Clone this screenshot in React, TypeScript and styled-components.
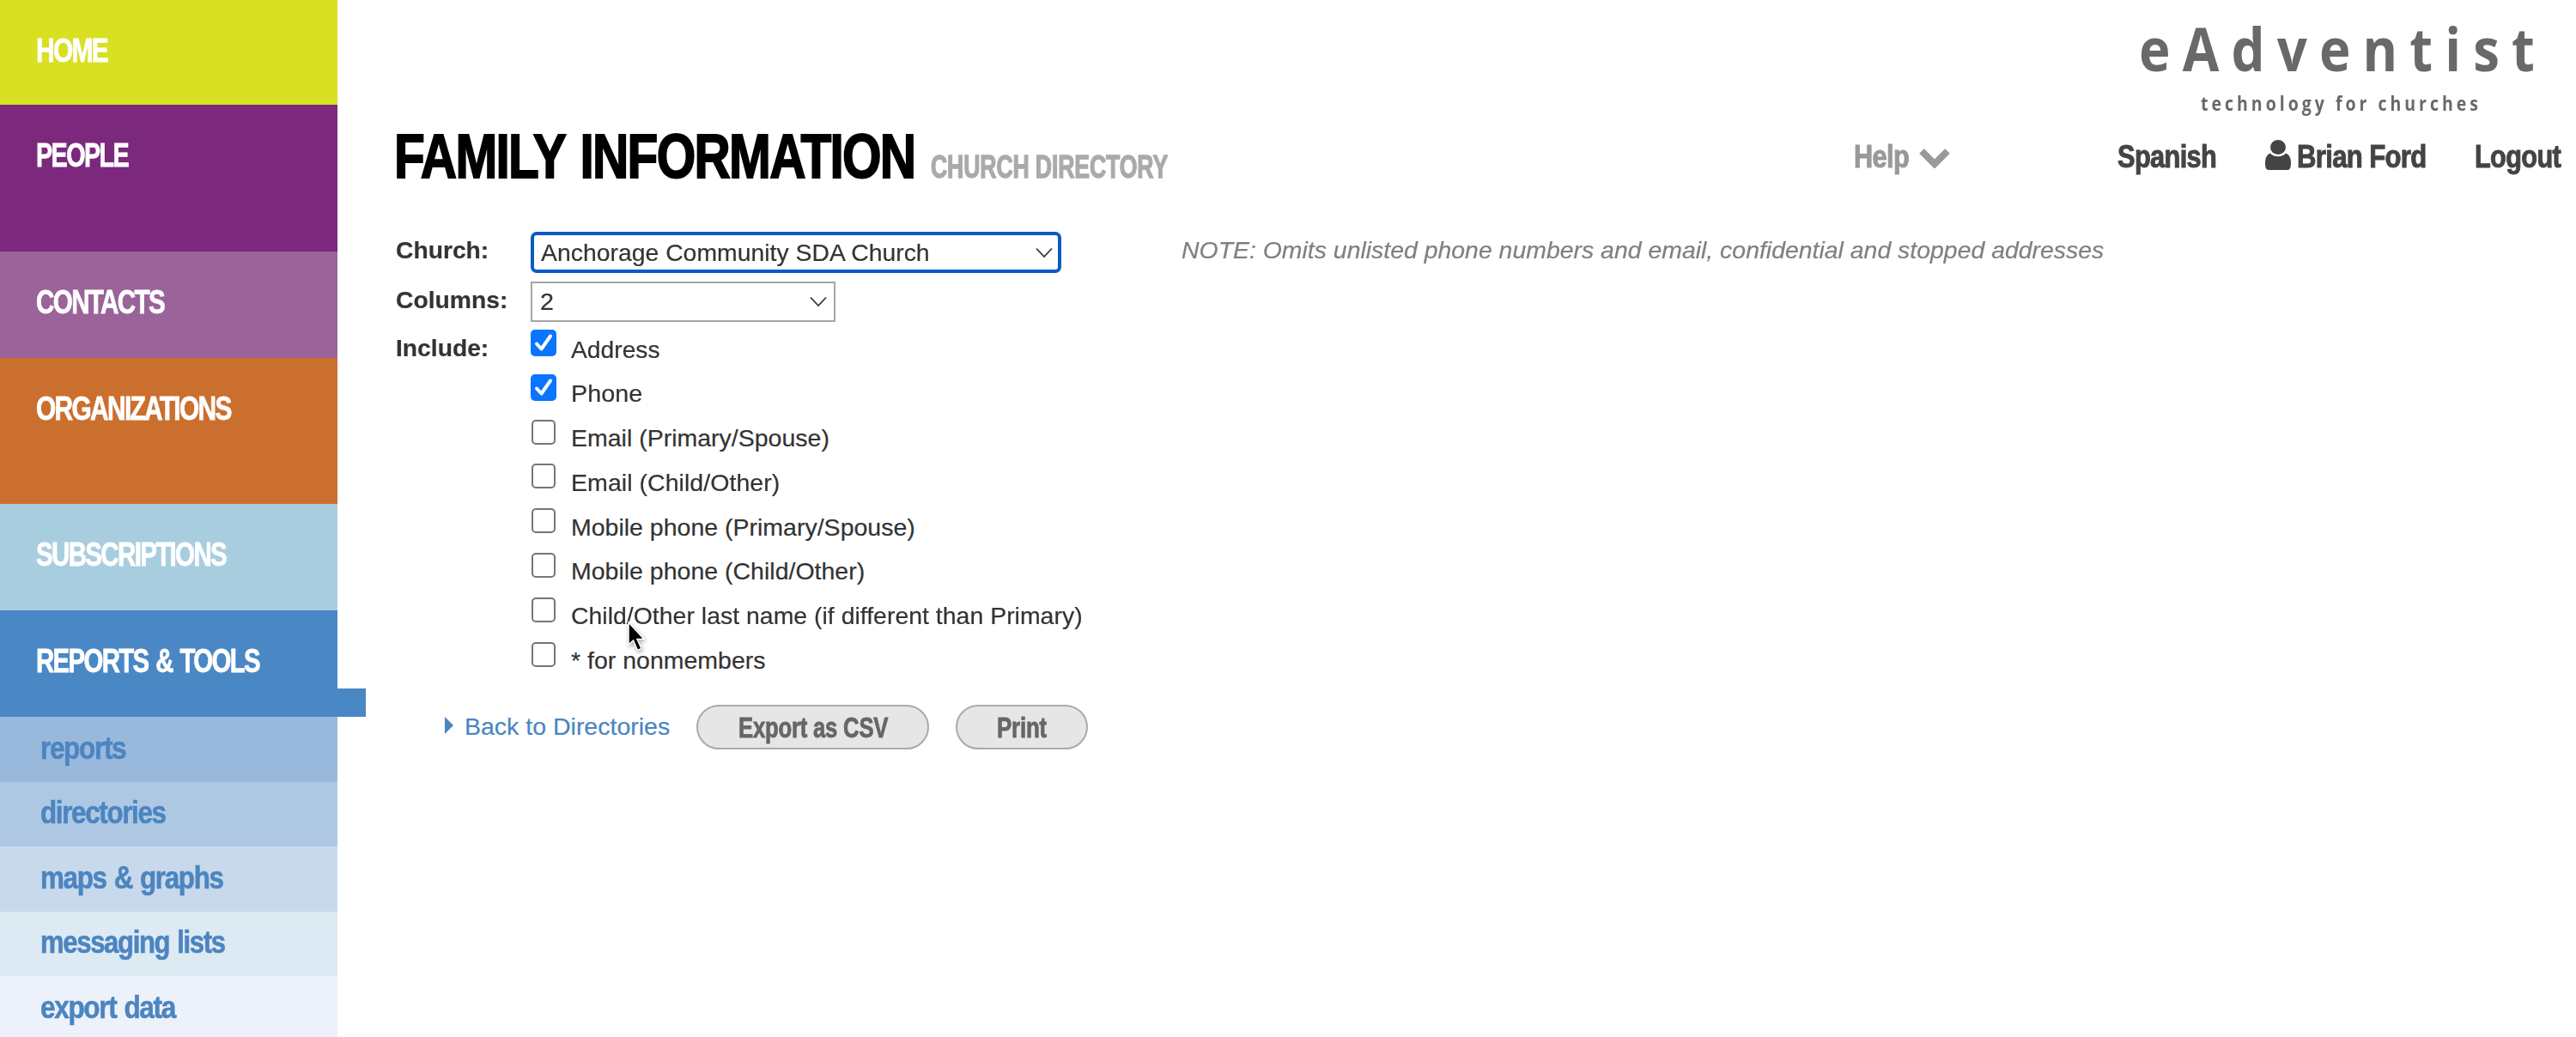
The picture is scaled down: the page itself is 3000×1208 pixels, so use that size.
import { FC, ReactNode, useLayoutEffect, useRef, useState } from 'react'
import styled, { createGlobalStyle } from 'styled-components'

const sans = '"Liberation Sans", Arial, sans-serif'

const GlobalStyle = createGlobalStyle`
  * {
    box-sizing: border-box;
  }

  body {
    margin: 0;
    background: #fff;
    color: #333;
    font-family: ${sans};
    overflow: hidden;
  }
`

const FitBox = styled.span`
  display: block;
  flex: none;
  white-space: nowrap;
`

const FitInner = styled.span`
  display: inline-block;
  vertical-align: top;
  transform-origin: 0 0;
`

type FitProps = {
  width: number;
  children: ReactNode;
}

// Condenses its text horizontally so that it takes exactly `width` pixels
const Fit: FC<FitProps> = ({ width, children }) => {
  const ref = useRef<HTMLSpanElement>(null)
  const [scale, setScale] = useState(1)

  useLayoutEffect(() => {
    if (ref.current) {
      setScale(width / ref.current.offsetWidth)
    }
  }, [width, children])

  return (
    <FitBox style={{ width }}>
      <FitInner ref={ref} style={{ transform: `scaleX(${scale})` }}>{children}</FitInner>
    </FitBox>
  )
}

const Page = styled.div`
  display: flex;
  width: 3000px;
  height: 1208px;
  overflow: hidden;
`

const Sidebar = styled.nav`
  flex: none;
  width: 393px;
`

const NavItem = styled.a<{ $color: string; $height: number }>`
  position: relative;
  display: block;
  height: ${({ $height }) => $height}px;
  padding: 39px 0 0 42px;
  background: ${({ $color }) => $color};
  color: #fff;
  font-size: 39px;
  font-weight: bold;
  line-height: 40px;
  letter-spacing: -2.2px;
  word-spacing: 3px;
  -webkit-text-stroke: 0.8px currentColor;
`

const ActiveTab = styled.span`
  position: absolute;
  left: 100%;
  bottom: 0;
  width: 33px;
  height: 33px;
  background: #4a87c5;
`

const SubItem = styled.a<{ $color: string }>`
  display: block;
  height: 75.6px;
  padding: 16.5px 0 0 46.5px;
  background: ${({ $color }) => $color};
  color: #4c85c0;
  font-size: 37px;
  font-weight: bold;
  line-height: 40px;
  letter-spacing: -1.6px;
  word-spacing: 2px;
  -webkit-text-stroke: 0.6px currentColor;
`

const Main = styled.main`
  flex: 1;
  padding-left: 66px;
`

const Brand = styled.div`
  display: flex;
  flex-direction: column;
  align-items: flex-end;
  height: 140px;
  padding: 16px 34px 0 0;
  color: #696969;
  font-family: "Open Sans", sans-serif;
`

const BrandName = styled.div`
  font-size: 70px;
  font-weight: 700;
  line-height: 80px;
  letter-spacing: 16px;
`

const Tagline = styled.div`
  margin: 9px 76px 0 0;
  font-size: 22.5px;
  font-weight: 700;
  line-height: 32px;
  letter-spacing: 4.6px;
`

const TitleBar = styled.header`
  display: flex;
  height: 130px;
  padding-top: 6px;
`

const Titles = styled.div`
  display: flex;
  align-items: baseline;
  gap: 19px;
  height: 72px;
`

const Title = styled.h1`
  margin: 0;
  color: #000;
  font-size: 72.5px;
  line-height: 72px;
  letter-spacing: -2.2px;
  word-spacing: 5px;
  -webkit-text-stroke: 1.8px currentColor;
`

const Subtitle = styled.h2`
  margin: 0;
  color: #aaa;
  font-size: 36.5px;
  line-height: 40px;
  letter-spacing: -0.2px;
  -webkit-text-stroke: 1.3px currentColor;
`

const UserNav = styled.div`
  display: flex;
  margin: 16px 18px 0 auto;
  color: #444;
  font-size: 37.5px;
  font-weight: bold;
  line-height: 40px;
  letter-spacing: -0.8px;
  -webkit-text-stroke: 1px currentColor;
`

const UserLink = styled.a<{ $gap?: number; $muted?: boolean }>`
  display: flex;
  margin-left: ${({ $gap = 0 }) => $gap}px;
  color: ${({ $muted }) => ($muted ? '#999' : 'inherit')};
`

const HelpChevron = styled.svg`
  width: 36px;
  height: 24px;
  margin: 10px 0 0 12px;
`

const UserIcon = styled.svg`
  width: 30px;
  height: 35px;
  margin: 1px 7px 0 0;
`

const Form = styled.form`
  display: grid;
  grid-template-columns: 159px 1fr;
  grid-template-rows: 57.5px 56.5px auto;
  font-size: 28.5px;
  line-height: 32px;
  -webkit-text-stroke: 0.2px currentColor;
`

const Label = styled.label`
  padding: 5px 0 0 2px;
  font-weight: bold;
`

const Field = styled.div`
  display: flex;
  align-items: flex-start;
`

const Select = styled.div<{ $width: number; $focused?: boolean }>`
  display: flex;
  flex: none;
  align-items: center;
  justify-content: space-between;
  width: ${({ $width }) => $width}px;
  height: ${({ $focused }) => ($focused ? 48 : 47)}px;
  padding: ${({ $focused }) => ($focused ? '0 6px 0 8px' : '0 8px 0 9px')};
  border: ${({ $focused }) => ($focused ? '4px solid #0a5cc4' : '2px solid #a6a6a6')};
  border-radius: ${({ $focused }) => ($focused ? 7 : 0)}px;
`

const Arrow = styled.svg`
  width: 20px;
  height: 13px;
`

const Note = styled.em`
  margin: 5px 0 0 140px;
  color: #808080;
`

const Options = styled.div`
  display: flex;
  flex-direction: column;
`

const Option = styled.label`
  display: flex;
  height: 51.8px;
`

const OptionText = styled.span`
  padding-top: 6.5px;
`

const Checkbox = styled.span<{ $checked?: boolean }>`
  flex: none;
  width: ${({ $checked }) => ($checked ? 30 : 28)}px;
  height: ${({ $checked }) => ($checked ? 31 : 29)}px;
  margin: ${({ $checked }) => ($checked ? '0 17px 0 0' : '1px 18px 0 1px')};
  border: ${({ $checked }) => ($checked ? 'none' : '2px solid #767676')};
  border-radius: 5px;
  background: ${({ $checked }) => ($checked ? '#0a75ff' : '#fff')};

  svg {
    display: block;
    width: 30px;
    height: 31px;
  }
`

const Actions = styled.div`
  display: flex;
  padding: 23px 0 0 59px;
`

const BackLink = styled.a`
  display: flex;
  margin-right: 31px;
  padding-top: 8.5px;
  color: #4a86c2;
  font-size: 28.5px;
  line-height: 32px;
  -webkit-text-stroke: 0.2px currentColor;
`

const Triangle = styled.svg`
  width: 10px;
  height: 20px;
  margin: 5px 13px 0 0;
`

const Button = styled.button<{ $width: number }>`
  display: flex;
  justify-content: center;
  width: ${({ $width }) => $width}px;
  height: 52px;
  margin-right: 31px;
  padding: 4px 0 0;
  border: 2px solid #aaa;
  border-radius: 26px;
  background: #e6e6e6;
  color: #666;
  font: bold 34px/40px ${sans};
  letter-spacing: -0.3px;
  -webkit-text-stroke: 0.8px currentColor;
`

const Cursor = styled.svg`
  position: absolute;
  left: 727px;
  top: 721px;
  width: 30px;
  height: 40px;
  filter: drop-shadow(1px 2px 2px rgba(0, 0, 0, 0.35));
`

const navItems = [
  { label: 'HOME', color: '#d8e021', height: 122, width: 83 },
  { label: 'PEOPLE', color: '#7b287d', height: 171, width: 107 },
  { label: 'CONTACTS', color: '#9a6399', height: 124, width: 149 },
  { label: 'ORGANIZATIONS', color: '#cb6f2f', height: 170, width: 227 },
  { label: 'SUBSCRIPTIONS', color: '#a8cddf', height: 124, width: 221 },
  { label: 'REPORTS & TOOLS', color: '#4a87c5', height: 124, width: 260, active: true },
]

const subItems = [
  { label: 'reports', color: '#98b9dc', width: 99 },
  { label: 'directories', color: '#aec8e4', width: 146 },
  { label: 'maps & graphs', color: '#c8d9eb', width: 213 },
  { label: 'messaging lists', color: '#ddeaf3', width: 215 },
  { label: 'export data', color: '#edf2fa', width: 157 },
]

const options = [
  { label: 'Address', width: 104, checked: true },
  { label: 'Phone', width: 83, checked: true },
  { label: 'Email (Primary/Spouse)', width: 301 },
  { label: 'Email (Child/Other)', width: 243 },
  { label: 'Mobile phone (Primary/Spouse)', width: 401 },
  { label: 'Mobile phone (Child/Other)', width: 342 },
  { label: 'Child/Other last name (if different than Primary)', width: 596 },
  { label: '* for nonmembers', width: 227 },
]

const SelectArrow = () => (
  <Arrow viewBox='0 0 20 13' fill='none' stroke='#333' strokeWidth='1.8'>
    <path d='M1 1.5 10 11l9-9.5' />
  </Arrow>
)

export default function App() {
  return (
    <>
      <GlobalStyle />
      <Page>
        <Sidebar>
          {navItems.map(({ label, color, height, width, active }) => (
            <NavItem key={label} $color={color} $height={height}>
              <Fit width={width}>{label}</Fit>
              {active && <ActiveTab />}
            </NavItem>
          ))}
          {subItems.map(({ label, color, width }) => (
            <SubItem key={label} $color={color}>
              <Fit width={width}>{label}</Fit>
            </SubItem>
          ))}
        </Sidebar>
        <Main>
          <Brand>
            <BrandName><Fit width={475}>eAdventist</Fit></BrandName>
            <Tagline><Fit width={327}>technology for churches</Fit></Tagline>
          </Brand>
          <TitleBar>
            <Titles>
              <Title><Fit width={606}>FAMILY INFORMATION</Fit></Title>
              <Subtitle><Fit width={276}>CHURCH DIRECTORY</Fit></Subtitle>
            </Titles>
            <UserNav>
              <UserLink $muted>
                <Fit width={64}>Help</Fit>
                <HelpChevron viewBox='0 0 36 24' fill='none' stroke='#999' strokeWidth='8'>
                  <path d='M3 4l15 15L33 4' />
                </HelpChevron>
              </UserLink>
              <UserLink $gap={195}><Fit width={115}>Spanish</Fit></UserLink>
              <UserLink $gap={57}>
                <UserIcon viewBox='0 0 30 35' fill='#444' stroke='none'>
                  <ellipse cx='15' cy='8.5' rx='9' ry='8.5' />
                  <path d='M6 15.5C2 17 0 21 0 27c0 5 1 8 4 8h22c3 0 4-3 4-8 0-6-2-10-6-11.5C22 18 19 19.3 15 19.3S8 18 6 15.5z' />
                </UserIcon>
                <Fit width={151}>Brian Ford</Fit>
              </UserLink>
              <UserLink $gap={56}><Fit width={100}>Logout</Fit></UserLink>
            </UserNav>
          </TitleBar>
          <Form>
            <Label><Fit width={108}>Church:</Fit></Label>
            <Field>
              <Select $width={618} $focused>
                <Fit width={453}>Anchorage Community SDA Church</Fit>
                <SelectArrow />
              </Select>
              <Note><Fit width={1074}>NOTE: Omits unlisted phone numbers and email, confidential and stopped addresses</Fit></Note>
            </Field>
            <Label><Fit width={130}>Columns:</Fit></Label>
            <Field>
              <Select $width={355}>
                <Fit width={16}>2</Fit>
                <SelectArrow />
              </Select>
            </Field>
            <Label><Fit width={108}>Include:</Fit></Label>
            <Options>
              {options.map(({ label, width, checked }) => (
                <Option key={label}>
                  <Checkbox $checked={checked}>
                    {checked && (
                      <svg viewBox='0 0 30 31' fill='none' stroke='#fff' strokeWidth='4' strokeLinecap='round' strokeLinejoin='round'>
                        <path d='M7 16.5l5.5 6L23 7.5' />
                      </svg>
                    )}
                  </Checkbox>
                  <OptionText><Fit width={width}>{label}</Fit></OptionText>
                </Option>
              ))}
            </Options>
          </Form>
          <Actions>
            <BackLink>
              <Triangle viewBox='0 0 10 20' fill='#4a86c2' stroke='none'>
                <path d='M0 0v20l10-10z' />
              </Triangle>
              <Fit width={239}>Back to Directories</Fit>
            </BackLink>
            <Button type='button' $width={271}><Fit width={174}>Export as CSV</Fit></Button>
            <Button type='button' $width={154}><Fit width={58}>Print</Fit></Button>
          </Actions>
        </Main>
      </Page>
      <Cursor viewBox='0 0 30 40'>
        <path d='M5 4v26l5.5-5 5 11.5 4.5-2-5-11h8z' stroke='#fff' strokeWidth='1.5' />
      </Cursor>
    </>
  )
}
